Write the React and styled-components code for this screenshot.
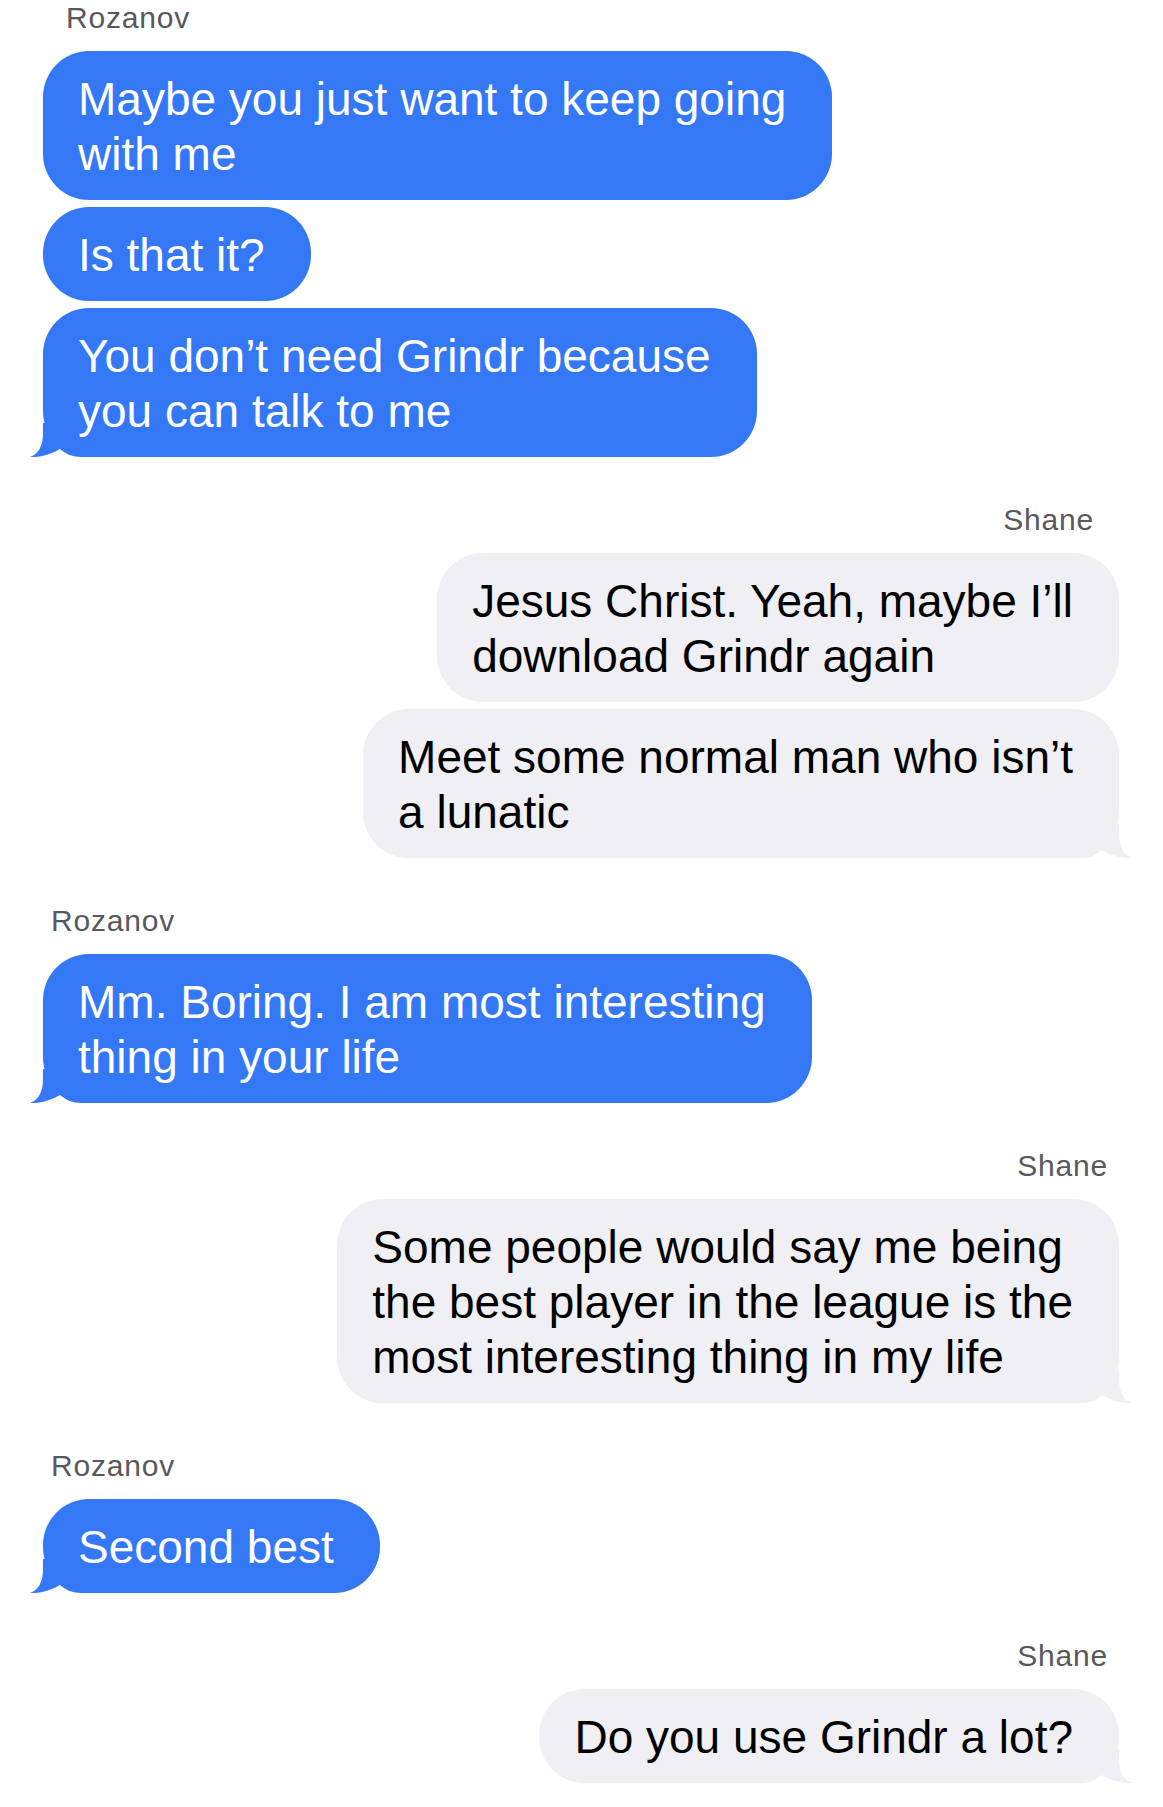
import React from 'react';
import styled, { createGlobalStyle } from 'styled-components';

const GlobalStyle = createGlobalStyle`
  html, body {
    margin: 0;
    padding: 0;
    background: #ffffff;
  }
  body {
    font-family: 'Liberation Sans', Arial, sans-serif;
    -webkit-font-smoothing: antialiased;
  }
`;

const BLUE = '#3478f6';
const GRAY = '#efeff4';

const Thread = styled.main`
  width: 1163px;
  box-sizing: border-box;
  padding: 0 44px 0 43px;
  display: flex;
  flex-direction: column;
  gap: 45px;
`;

const Group = styled.section`
  display: flex;
  flex-direction: column;
  align-items: ${({ $mine }) => ($mine ? 'flex-end' : 'flex-start')};
`;

const Name = styled.div`
  font-size: 30px;
  line-height: 36px;
  letter-spacing: 0.8px;
  color: #58585d;
  margin-bottom: 15px;
  padding-left: ${({ $mine, $inset }) => ($mine ? 0 : $inset)}px;
  padding-right: ${({ $mine, $inset }) => ($mine ? $inset : 0)}px;
`;

const Stack = styled.div`
  display: flex;
  flex-direction: column;
  align-items: inherit;
  gap: 7px;
`;

const Bubble = styled.div`
  position: relative;
  padding: 21px 46px 18px 35px;
  border-radius: 46px;
  font-size: 46px;
  line-height: 55px;
  white-space: nowrap;
  background: ${({ $mine }) => ($mine ? GRAY : BLUE)};
  color: ${({ $mine }) => ($mine ? '#000000' : '#ffffff')};
`;

const Text = styled.span`
  position: relative;
  z-index: 1;
`;

const Tail = styled.svg`
  position: absolute;
  bottom: 0;
  width: 60px;
  height: 34px;
  fill: ${({ $mine }) => ($mine ? GRAY : BLUE)};
  ${({ $mine }) =>
    $mine ? 'right: -13px; transform: scaleX(-1);' : 'left: -13px;'}
`;

const thread = [
  {
    from: 'Rozanov',
    mine: false,
    inset: 23,
    messages: [
      ['Maybe you just want to keep going', 'with me'],
      ['Is that it?'],
      ['You don’t need Grindr because', 'you can talk to me'],
    ],
  },
  {
    from: 'Shane',
    mine: true,
    inset: 25,
    messages: [
      ['Jesus Christ. Yeah, maybe I’ll', 'download Grindr again'],
      ['Meet some normal man who isn’t', 'a lunatic'],
    ],
  },
  {
    from: 'Rozanov',
    mine: false,
    inset: 8,
    messages: [['Mm. Boring. I am most interesting', 'thing in your life']],
  },
  {
    from: 'Shane',
    mine: true,
    inset: 11,
    messages: [
      [
        'Some people would say me being',
        'the best player in the league is the',
        'most interesting thing in my life',
      ],
    ],
  },
  {
    from: 'Rozanov',
    mine: false,
    inset: 8,
    messages: [['Second best']],
  },
  {
    from: 'Shane',
    mine: true,
    inset: 11,
    messages: [['Do you use Grindr a lot?']],
  },
];

const Message = ({ lines, mine, last }) => (
  <Bubble $mine={mine}>
    <Text>
      {lines.map((line, i) => (
        <React.Fragment key={i}>
          {i > 0 && <br />}
          {line}
        </React.Fragment>
      ))}
    </Text>
    {last && (
      <Tail $mine={mine} viewBox="0 0 60 34" aria-hidden="true">
        <path d="M13 0 L13 10 C13 22 9 31 0 34 C10 34.5 22 31 30 26 C36 31 42 34 52 34 L60 34 L60 0 Z" />
      </Tail>
    )}
  </Bubble>
);

export default function App() {
  return (
    <>
      <GlobalStyle />
      <Thread>
        {thread.map((group, g) => (
          <Group key={g} $mine={group.mine}>
            <Name $mine={group.mine} $inset={group.inset}>
              {group.from}
            </Name>
            <Stack>
              {group.messages.map((lines, i) => (
                <Message
                  key={i}
                  lines={lines}
                  mine={group.mine}
                  last={i === group.messages.length - 1}
                />
              ))}
            </Stack>
          </Group>
        ))}
      </Thread>
    </>
  );
}
